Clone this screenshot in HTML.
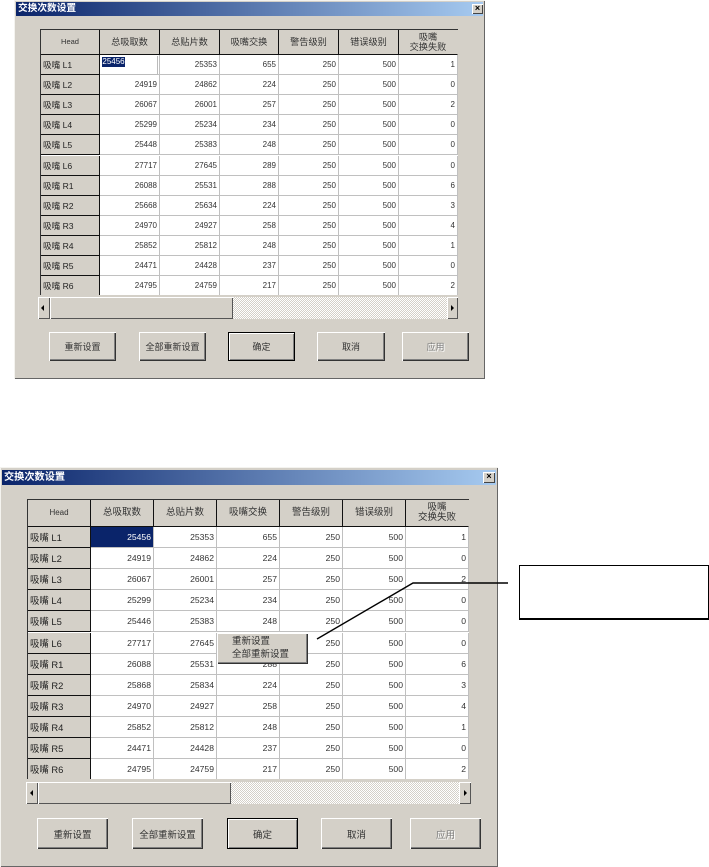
<!DOCTYPE html>
<html lang="zh">
<head>
<meta charset="utf-8">
<title>交换次数设置</title>
<style>
html,body{margin:0;padding:0;background:#fff;}
body{position:relative;width:709px;height:867px;overflow:hidden;font-family:"Liberation Sans","Noto Sans CJK SC",sans-serif;color:#333;}
div{box-sizing:border-box;}
.a{position:absolute;}
.dlg{position:absolute;background:#d4d0c8;box-shadow:inset 1px 1px 0 #f4f3ef,inset -1px -1px 0 #666;}
.title{position:absolute;background:linear-gradient(90deg,#0a246a,#a6caf0);color:#fff;font-weight:bold;white-space:nowrap;padding-left:2px;}
.close{position:absolute;background:#d4d0c8;box-shadow:inset 1px 1px 0 #fff,inset -1px -1px 0 #444;color:#000;font:bold 9px/9px "Liberation Sans",sans-serif;text-align:center;}
.tbl{position:absolute;background:#fff;border-top:1px solid #333;border-left:1px solid #333;}
.row{position:absolute;left:0;display:grid;height:var(--h);top:calc(var(--h2) * var(--i) + var(--h0));}
.c{border-right:1px solid #c0c0c0;border-bottom:1px solid #c0c0c0;text-align:right;padding-right:2px;line-height:var(--h);overflow:hidden;white-space:nowrap;background:#fff;}
.r{background:#d4d0c8;border-right:1px solid #111;border-bottom:1px solid #111;text-align:left;padding:0 0 0 2px;color:#222;}
.h{background:#d4d0c8;border-right:1px solid #111;border-bottom:1px solid #111;text-align:center;padding:0;display:flex;align-items:center;justify-content:center;line-height:10px;}
.h.last{border-right-color:#d4d0c8;}
.t1{left:40px;top:29px;width:418px;height:266px;font-size:8px;--h:20.1px;--h2:20.1px;--h0:25px;}
.t1 .row,.t1 .hd{grid-template-columns:59px 60px 60px 59px 60px 60px 59px;}
.t2{left:27px;top:499px;width:442px;height:280px;font-size:8.6px;--h:21.1px;--h2:21.1px;--h0:27px;}
.t2 .row,.t2 .hd{grid-template-columns:63px 63px 63px 63px 63px 63px 63px;}
.t1 .r{font-size:8.6px;}
.t2 .r{font-size:9.4px;}
.t1 .h{font-size:9.2px;}
.t2 .h{font-size:9.5px;}
.hd{position:absolute;left:0;top:0;display:grid;height:var(--h0);}
.clip{position:absolute;left:0;top:0;right:0;bottom:0;overflow:hidden;}
.sel{background:#0a246a;color:#fff;}
.btn{position:absolute;background:#d4d0c8;box-shadow:inset 1px 1px 0 #fff,inset -1px -1px 0 #333,inset -2px -2px 0 #808080;display:flex;align-items:center;justify-content:center;color:#333;white-space:nowrap;}
.def{box-shadow:inset 0 0 0 1px #000,inset 2px 2px 0 #fff,inset -2px -2px 0 #808080;}
.dis{color:#808080;text-shadow:1px 1px 0 #fff;}
.s{position:absolute;background:#d4d0c8;box-shadow:inset 1px 1px 0 #fff,inset -1px -1px 0 #555;}
.track{position:absolute;background:conic-gradient(#d4d0c8 25%,#fff 0 50%,#d4d0c8 0 75%,#fff 0) 0 0/2px 2px;}
.al,.ar{position:absolute;width:0;height:0;border-top:3px solid transparent;border-bottom:3px solid transparent;}
.al{border-right:3px solid #000;}
.ar{border-left:3px solid #000;}
</style>
</head>
<body>

<!-- Dialog 1 -->
<div class="dlg" style="left:14px;top:0;width:471px;height:379px"></div>
<div class="title" style="left:16px;top:2px;width:467px;height:14px;font-size:9.7px;line-height:14px">交换次数设置</div>
<div class="close" style="left:472px;top:4px;width:11px;height:10px">×</div>

<div class="tbl t1"><div class="clip">
<div class="hd"><div class="c h" style="font-size:7.5px">Head</div><div class="c h">总吸取数</div><div class="c h">总贴片数</div><div class="c h">吸嘴交换</div><div class="c h">警告级别</div><div class="c h">错误级别</div><div class="c h last">吸嘴<br>交换失败</div></div>
<div class="row" style="--i:0"><div class="c r">吸嘴 L1</div><div class="c" style="position:relative"></div><div class="c">25353</div><div class="c">655</div><div class="c">250</div><div class="c">500</div><div class="c">1</div></div>
<div class="row" style="--i:1"><div class="c r">吸嘴 L2</div><div class="c">24919</div><div class="c">24862</div><div class="c">224</div><div class="c">250</div><div class="c">500</div><div class="c">0</div></div>
<div class="row" style="--i:2"><div class="c r">吸嘴 L3</div><div class="c">26067</div><div class="c">26001</div><div class="c">257</div><div class="c">250</div><div class="c">500</div><div class="c">2</div></div>
<div class="row" style="--i:3"><div class="c r">吸嘴 L4</div><div class="c">25299</div><div class="c">25234</div><div class="c">234</div><div class="c">250</div><div class="c">500</div><div class="c">0</div></div>
<div class="row" style="--i:4"><div class="c r">吸嘴 L5</div><div class="c">25448</div><div class="c">25383</div><div class="c">248</div><div class="c">250</div><div class="c">500</div><div class="c">0</div></div>
<div class="row" style="--i:5"><div class="c r">吸嘴 L6</div><div class="c">27717</div><div class="c">27645</div><div class="c">289</div><div class="c">250</div><div class="c">500</div><div class="c">0</div></div>
<div class="row" style="--i:6"><div class="c r">吸嘴 R1</div><div class="c">26088</div><div class="c">25531</div><div class="c">288</div><div class="c">250</div><div class="c">500</div><div class="c">6</div></div>
<div class="row" style="--i:7"><div class="c r">吸嘴 R2</div><div class="c">25668</div><div class="c">25634</div><div class="c">224</div><div class="c">250</div><div class="c">500</div><div class="c">3</div></div>
<div class="row" style="--i:8"><div class="c r">吸嘴 R3</div><div class="c">24970</div><div class="c">24927</div><div class="c">258</div><div class="c">250</div><div class="c">500</div><div class="c">4</div></div>
<div class="row" style="--i:9"><div class="c r">吸嘴 R4</div><div class="c">25852</div><div class="c">25812</div><div class="c">248</div><div class="c">250</div><div class="c">500</div><div class="c">1</div></div>
<div class="row" style="--i:10"><div class="c r">吸嘴 R5</div><div class="c">24471</div><div class="c">24428</div><div class="c">237</div><div class="c">250</div><div class="c">500</div><div class="c">0</div></div>
<div class="row" style="--i:11"><div class="c r">吸嘴 R6</div><div class="c">24795</div><div class="c">24759</div><div class="c">217</div><div class="c">250</div><div class="c">500</div><div class="c">2</div></div>
</div></div>
<!-- edit box -->
<div class="a" style="left:101px;top:56px;width:57px;height:19px;background:#fff;border-right:1px solid #bbb;border-bottom:1px solid #bbb"></div>
<div class="a" style="left:102px;top:57px;width:23px;height:10px;background:#0a246a;color:#fff;font-size:8px;line-height:10px;text-align:center">25456</div>

<!-- Scrollbar 1 -->
<div class="track" style="left:233px;top:297px;width:214px;height:22px"></div>
<div class="s" style="left:38px;top:297px;width:12px;height:22px"><div class="al" style="left:3px;top:8px"></div></div>
<div class="s" style="left:50px;top:297px;width:183px;height:22px"></div>
<div class="s" style="left:447px;top:297px;width:11px;height:22px"><div class="ar" style="left:4px;top:8px"></div></div>

<div class="btn" style="left:49px;top:332px;width:67px;height:29px;font-size:9px">重新设置</div>
<div class="btn" style="left:139px;top:332px;width:67px;height:29px;font-size:9px">全部重新设置</div>
<div class="btn def" style="left:228px;top:332px;width:67px;height:29px;font-size:9px">确定</div>
<div class="btn" style="left:317px;top:332px;width:68px;height:29px;font-size:9px">取消</div>
<div class="btn dis" style="left:402px;top:332px;width:67px;height:29px;font-size:9px">应用</div>

<!-- Dialog 2 -->
<div class="dlg" style="left:0;top:467px;width:498px;height:400px"></div>
<div class="title" style="left:2px;top:470px;width:494px;height:15px;font-size:10.2px;line-height:15px">交换次数设置</div>
<div class="close" style="left:483px;top:472px;width:12px;height:11px">×</div>

<div class="tbl t2"><div class="clip">
<div class="hd"><div class="c h" style="font-size:8px">Head</div><div class="c h">总吸取数</div><div class="c h">总贴片数</div><div class="c h">吸嘴交换</div><div class="c h">警告级别</div><div class="c h">错误级别</div><div class="c h last">吸嘴<br>交换失败</div></div>
<div class="row" style="--i:0"><div class="c r">吸嘴 L1</div><div class="c sel">25456</div><div class="c">25353</div><div class="c">655</div><div class="c">250</div><div class="c">500</div><div class="c">1</div></div>
<div class="row" style="--i:1"><div class="c r">吸嘴 L2</div><div class="c">24919</div><div class="c">24862</div><div class="c">224</div><div class="c">250</div><div class="c">500</div><div class="c">0</div></div>
<div class="row" style="--i:2"><div class="c r">吸嘴 L3</div><div class="c">26067</div><div class="c">26001</div><div class="c">257</div><div class="c">250</div><div class="c">500</div><div class="c">2</div></div>
<div class="row" style="--i:3"><div class="c r">吸嘴 L4</div><div class="c">25299</div><div class="c">25234</div><div class="c">234</div><div class="c">250</div><div class="c">500</div><div class="c">0</div></div>
<div class="row" style="--i:4"><div class="c r">吸嘴 L5</div><div class="c">25446</div><div class="c">25383</div><div class="c">248</div><div class="c">250</div><div class="c">500</div><div class="c">0</div></div>
<div class="row" style="--i:5"><div class="c r">吸嘴 L6</div><div class="c">27717</div><div class="c">27645</div><div class="c">285</div><div class="c">250</div><div class="c">500</div><div class="c">0</div></div>
<div class="row" style="--i:6"><div class="c r">吸嘴 R1</div><div class="c">26088</div><div class="c">25531</div><div class="c">288</div><div class="c">250</div><div class="c">500</div><div class="c">6</div></div>
<div class="row" style="--i:7"><div class="c r">吸嘴 R2</div><div class="c">25868</div><div class="c">25834</div><div class="c">224</div><div class="c">250</div><div class="c">500</div><div class="c">3</div></div>
<div class="row" style="--i:8"><div class="c r">吸嘴 R3</div><div class="c">24970</div><div class="c">24927</div><div class="c">258</div><div class="c">250</div><div class="c">500</div><div class="c">4</div></div>
<div class="row" style="--i:9"><div class="c r">吸嘴 R4</div><div class="c">25852</div><div class="c">25812</div><div class="c">248</div><div class="c">250</div><div class="c">500</div><div class="c">1</div></div>
<div class="row" style="--i:10"><div class="c r">吸嘴 R5</div><div class="c">24471</div><div class="c">24428</div><div class="c">237</div><div class="c">250</div><div class="c">500</div><div class="c">0</div></div>
<div class="row" style="--i:11"><div class="c r">吸嘴 R6</div><div class="c">24795</div><div class="c">24759</div><div class="c">217</div><div class="c">250</div><div class="c">500</div><div class="c">2</div></div>
</div></div>

<!-- Scrollbar 2 -->
<div class="track" style="left:231px;top:782px;width:228px;height:22px"></div>
<div class="s" style="left:26px;top:782px;width:12px;height:22px"><div class="al" style="left:4px;top:8px"></div></div>
<div class="s" style="left:38px;top:782px;width:193px;height:22px"></div>
<div class="s" style="left:459px;top:782px;width:12px;height:22px"><div class="ar" style="left:5px;top:8px"></div></div>

<div class="btn" style="left:37px;top:818px;width:71px;height:31px;font-size:9.5px">重新设置</div>
<div class="btn" style="left:132px;top:818px;width:71px;height:31px;font-size:9.4px">全部重新设置</div>
<div class="btn def" style="left:227px;top:818px;width:71px;height:31px;font-size:9.5px">确定</div>
<div class="btn" style="left:321px;top:818px;width:71px;height:31px;font-size:9.5px">取消</div>
<div class="btn dis" style="left:410px;top:818px;width:71px;height:31px;font-size:9.5px">应用</div>

<!-- Context menu -->
<div class="a" style="left:217px;top:633px;width:91px;height:31px;background:#d4d0c8;box-shadow:inset 1px 1px 0 #fff,inset -1px -1px 0 #333,inset -2px -2px 0 #808080"></div>
<div class="a" style="left:232px;top:635px;font-size:9.5px;line-height:13px;white-space:nowrap">重新设置</div>
<div class="a" style="left:232px;top:648px;font-size:9.5px;line-height:13px;white-space:nowrap">全部重新设置</div>

<!-- Callout -->
<svg class="a" style="left:0;top:0" width="709" height="867">
<polyline points="317,639 413,583 508,583" fill="none" stroke="#000" stroke-width="1.4"/>
</svg>
<div class="a" style="left:519px;top:565px;width:190px;height:55px;background:#fff;border:1px solid #000;border-bottom-width:2px"></div>

</body>
</html>
